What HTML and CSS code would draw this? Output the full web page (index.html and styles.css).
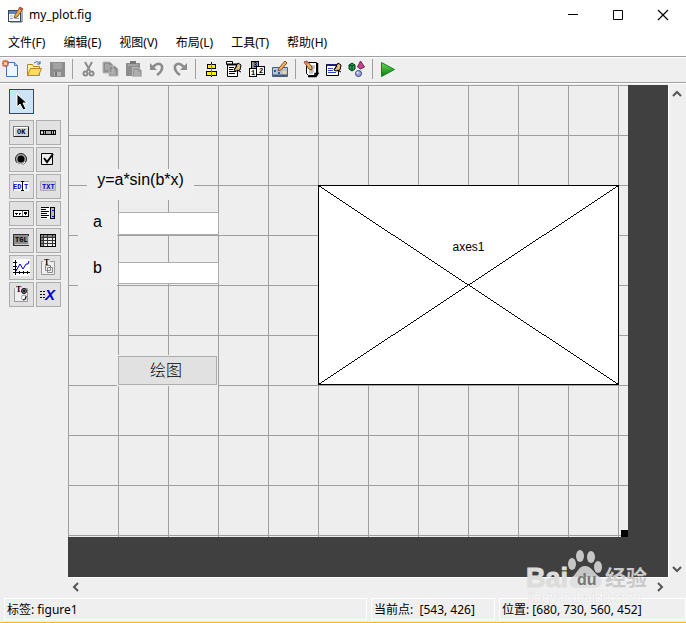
FILE: index.html
```html
<!DOCTYPE html>
<html lang="zh-CN">
<head>
<meta charset="utf-8">
<title>my_plot.fig</title>
<link rel="stylesheet" href="styles.css">
</head>
<body>
<div class="window">
  <header class="titlebar">
    <svg class="app-icon" width="18" height="18" viewBox="0 0 18 18"><rect x="1.500" y="4.500" width="12" height="11" fill="#fff" stroke="#33435c"/><path d="M2 5h11v3H2z" fill="#5c83bd"/><path d="M3 10h3M3 12.500h3M8 10h4M8 12.500h4" stroke="#8da0bc"/><path d="M15 5v11H3" fill="none" stroke="#52617a"/><path d="M13 1l3 2-6 8-3 1 1-3z" fill="#efaa4b" stroke="#86572c"/><path d="M13 1l3 2-1 2-3-2z" fill="#c65245"/></svg>
    <h1 class="title">my_plot.fig</h1>
    <div class="window-controls">
      <button class="window-button" aria-label="最小化"><svg width="12" height="12"><path d="M1 5.500h10" stroke="#000"/></svg></button>
      <button class="window-button" aria-label="最大化"><svg width="12" height="12"><path d="M1.500 1.500h9v9h-9z" fill="none" stroke="#000"/></svg></button>
      <button class="window-button" aria-label="关闭"><svg width="12" height="12"><path d="M1 1l10 10M11 1L1 11" stroke="#000" stroke-width="1.200"/></svg></button>
    </div>
  </header>
  <nav class="menubar">
    <button class="menu">文件(F)</button><button class="menu">编辑(E)</button><button class="menu">视图(V)</button><button class="menu">布局(L)</button><button class="menu">工具(T)</button><button class="menu">帮助(H)</button>
  </nav>
  <div class="toolbar" role="toolbar">
    <button class="tool" aria-label="新建"><svg width="18" height="18"><path d="M4.500 2.500h8l3 3v11h-11z" fill="#eef5ff" stroke="#4b73ba"/><path d="M12.500 2.500v3h3" fill="#bed5f6" stroke="#4b73ba"/><path d="M1 1h5v5H1z" fill="#e88c5c" stroke="#cf5830"/><path d="M3.500 0v7M0 3.500h7" stroke="#dc6a38"/><circle cx="3.500" cy="3.500" r="1.500" fill="#ffe4a0"/></svg></button>
    <button class="tool" aria-label="打开"><svg width="18" height="18"><path d="M2.500 15.500v-11h5l1 2h6v9z" fill="#fff0a6" stroke="#b8841b"/><path d="M2.500 15.500l3-7h11l-3 7z" fill="#ffdb61" stroke="#b8841b"/><path d="M9 3q4-3 6 1m0-3v3h-3" fill="none" stroke="#3e6b9d"/></svg></button>
    <button class="tool" aria-label="保存"><svg width="18" height="18"><path d="M2 2h15v15H3l-1-1z" fill="#8d8d8d"/><path d="M5 3h9v6H5z" fill="#a2a2a2"/><path d="M6 12h7v4H6z" fill="#b5b5b5"/><path d="M7 12h2v4H7z" fill="#777"/></svg></button>
    <span class="divider"></span>
    <button class="tool" aria-label="剪切"><svg width="18" height="18"><path d="M6 2l5 9M13 2L8 11" stroke="#8c8c8c" stroke-width="2"/><circle cx="6.500" cy="13.500" r="2" fill="none" stroke="#8c8c8c" stroke-width="2"/><circle cx="12.500" cy="13.500" r="2" fill="none" stroke="#8c8c8c" stroke-width="2"/></svg></button>
    <button class="tool" aria-label="复制"><svg width="18" height="18"><path d="M1 2h7l3 3v8H1zM7 6h6l3 3v7H7z" fill="#8d8d8d" stroke="#bababa"/><path d="M3 5h4M3 7h3M3 9h3M9 10h4M9 12h5M9 14h5" stroke="#bebebe"/></svg></button>
    <button class="tool" aria-label="粘贴"><svg width="18" height="18"><path d="M1 3h14v13H1z" fill="#8d8d8d"/><path d="M5 1h6v3H5z" fill="#777"/><path d="M3 5h10" stroke="#bbb"/><path d="M7.500 7.500h6l3 3v6h-9z" fill="#999" stroke="#bababa"/><path d="M9 11h4M9 13h6M9 15h6" stroke="#c2c2c2"/></svg></button>
    <button class="tool" aria-label="撤销"><svg width="18" height="18"><path d="M5 7q6-6 9-1 1 5-5 9" fill="none" stroke="#8c8c8c" stroke-width="2.500"/><path d="M2 3v7h7z" fill="#8c8c8c"/></svg></button>
    <button class="tool" aria-label="重做"><svg width="18" height="18"><path d="M13 7Q7 1 4 6q-1 5 5 9" fill="none" stroke="#8c8c8c" stroke-width="2.500"/><path d="M16 3v7H9z" fill="#8c8c8c"/></svg></button>
    <span class="divider"></span>
    <button class="tool" aria-label="对齐对象"><svg class="crisp" width="18" height="18"><path d="M9.500 2v15" stroke="#000"/><path d="M5.500 4.500h8v4h-8zM4.500 11.500h10v4h-10z" fill="#ffef00" stroke="#000"/><path d="M9.500 4v12" stroke="#777"/></svg></button>
    <button class="tool" aria-label="菜单编辑器"><svg width="18" height="18"><path d="M1.500 1.500h6v3h-6z" fill="#fff" stroke="#000"/><path d="M2.500 4.500h10v12h-10z" fill="#fff" stroke="#000"/><path d="M2 4.500h11" stroke="#000" stroke-width="2"/><path d="M4 7.500h5M4 9.500h4M4 11.500h7M4 13.500h6" stroke="#000"/><path d="M13 3l3 2-1 5-4 1-2-1z" fill="#e6be7e" stroke="#000"/><path d="M9 10l3-4M12 10l4 2" fill="none" stroke="#000"/></svg></button>
    <button class="tool" aria-label="Tab 键顺序编辑器"><svg class="crisp" width="18" height="18"><path d="M3.500 1.500h7v7h-7z" fill="#8f9eb5" stroke="#000"/><path d="M1.500 8.500h7v8h-7zM8.500 6.500h8v8h-8z" fill="#fff" stroke="#000"/><text x="5" y="7" class="micro">3</text><text x="3" y="15" class="micro">1</text><text x="11" y="13" class="micro">2</text></svg></button>
    <button class="tool" aria-label="工具栏编辑器"><svg width="18" height="18"><path d="M1.500 7.500h15v9h-15z" fill="#b5c4d8" stroke="#4c617e"/><path d="M2 15.500h14" stroke="#465b78" stroke-width="2"/><path d="M3 10h2v2H3zM7 12h2v2H7z" fill="#315b9c"/><path d="M12 11h3v3h-3z" fill="#efda73"/><path d="M14 1l2 2-6 7-3 1 1-3z" fill="#efb55b" stroke="#8a4c2d"/></svg></button>
    <span class="divider"></span>
    <button class="tool" aria-label="编辑器"><svg width="18" height="18"><path d="M4.500 2.500h10v13h-8l-2-2z" fill="#fff" stroke="#000"/><path d="M15.500 3v10M6 16.500h8l2-3h-3v3" fill="none" stroke="#000" stroke-width="1.500"/><path d="M9 6h4M10 8h3M7 11h5M7 13h4" stroke="#8a8a8a"/><path d="M2 2l3-1 5 6v3l-3-1z" fill="#efb55b" stroke="#6c3b20"/><path d="M2 2l3-1 1 2-2 2z" fill="#d86f67"/></svg></button>
    <button class="tool" aria-label="属性检查器"><svg width="18" height="18"><path d="M1.500 4.500h12v11h-12z" fill="#fff" stroke="#000"/><path d="M2 5h11" stroke="#17217f" stroke-width="2"/><path d="M3 8.500h5M3 10.500h5M3 12.500h8" stroke="#3345bb"/><path d="M13 3l3 2-1 5-4 1-2-1z" fill="#e6be7e" stroke="#000"/><path d="M9 10l3-4M12 10l4 2" fill="none" stroke="#000"/></svg></button>
    <button class="tool" aria-label="对象浏览器"><svg width="18" height="18"><path d="M1 5l3-2 3 2v4l-3 2-3-2z" fill="#12a64d" stroke="#063b1b"/><path d="M1 5l3 1 3-1M4 6v5" fill="none" stroke="#063b1b"/><path d="M12.500 1l-3 6 3 2 4-2z" fill="#cc408d" stroke="#6b244c"/><circle cx="10.500" cy="13.500" r="3" fill="#9ba8dc" stroke="#303c79"/><circle cx="9.500" cy="12.500" r="1" fill="#edf0ff"/></svg></button>
    <span class="divider"></span>
    <button class="tool" aria-label="运行"><svg width="18" height="18"><defs><linearGradient id="run" x1="0" y1="0" x2="0" y2="1"><stop offset="0" stop-color="#6bd95b"/><stop offset="1" stop-color="#087c10"/></linearGradient></defs><path d="M2.500 2.500v14l13-7z" fill="url(#run)" stroke="#168018"/></svg></button>
  </div>
  <main class="workspace">
    <aside class="palette">
      <button class="part selected" aria-label="选择"><svg width="21" height="21"><path d="M6 3v13l3-3 3 6 3-1-3-6h4z" fill="#000" stroke="#fff"/></svg></button>
      <button class="part" aria-label="按钮"><svg class="crisp" width="21" height="21"><path d="M2.500 4.500h15v10h-15z" fill="#d4d4d4" stroke="#777"/><path d="M3 14V5h14" stroke="#fff" fill="none"/><path d="M3 14.500h14.500V5" stroke="#222" fill="none"/><text x="6" y="12" class="micro">OK</text></svg></button>
      <button class="part" aria-label="滑块"><svg class="crisp" width="21" height="21"><path d="M2.500 8.500h15v4h-15z" fill="#aaa" stroke="#000"/><path d="M5.500 9v3M7.500 9v3M13.500 9v3M15.500 9v3" stroke="#000"/><path d="M3 10h2M16 10h1" stroke="#fff"/></svg></button>
      <button class="part" aria-label="单选按钮"><svg width="21" height="21"><circle cx="10" cy="10" r="5.500" fill="#aaa" stroke="#222"/><path d="M6 14a5 5 0 0 0 8-1" fill="none" stroke="#fff"/><circle cx="10" cy="10" r="3.500" fill="#000"/></svg></button>
      <button class="part" aria-label="复选框"><svg width="21" height="21"><path d="M3.500 4.500h11v11h-11z" fill="#eee" stroke="#000"/><path d="M6 9l3 4 6-8" fill="none" stroke="#000" stroke-width="2"/></svg></button>
      <button class="part" aria-label="可编辑文本"><svg width="21" height="21"><path d="M2 5h16v10H2z" fill="#fff"/><path d="M2.500 15V5.500H18" fill="none" stroke="#999"/><text x="2" y="13" class="micro blue">ED</text><text x="13" y="13" class="micro blue">T</text><path d="M11.500 6v8M10 5.500h3M10 14.500h3" stroke="#000"/></svg></button>
      <button class="part" aria-label="静态文本"><svg width="21" height="21"><path d="M2.500 5.500h15v9h-15z" fill="#cfcfcf" stroke="#aaa"/><text x="4" y="13" class="micro blue">TXT</text></svg></button>
      <button class="part" aria-label="弹出菜单"><svg class="crisp" width="21" height="21"><rect x="2.500" y="7.500" width="15" height="6" rx="1" fill="#fff" stroke="#000"/><path d="M4 10h3M5 11h1M8 10h2M8 11h1M13 9h3l-1 2h-1z" fill="#000" stroke="#000"/><path d="M11.500 8v5" stroke="#777"/></svg></button>
      <button class="part" aria-label="列表框"><svg class="crisp" width="21" height="21"><path d="M3.500 4.500h13v11h-13z" fill="#fff"/><path d="M3 4.500h8M3 6.500h5M3 8.500h8M3 10.500h6M3 12.500h8M3 14.500h6" stroke="#000"/><path d="M12.500 4.500h4v11h-4z" fill="#bbb" stroke="#000"/><path d="M14 7h2M14 13h2" stroke="#0000d9"/></svg></button>
      <button class="part" aria-label="切换按钮"><svg class="crisp" width="21" height="21"><path d="M2.500 4.500h15v11h-15z" fill="#8d8d8d" stroke="#333"/><path d="M4 14.500h13.500V6" fill="none" stroke="#ccc"/><text x="4" y="12" class="micro">TGL</text></svg></button>
      <button class="part" aria-label="表"><svg class="crisp" width="21" height="21"><path d="M2.500 4.500h15v12h-15z" fill="#eee" stroke="#000"/><path d="M3 5h14v2H3zM3 5h2v11H3z" fill="#888"/><path d="M5.500 5v11M9.500 5v11M14.500 5v11M3 7.500h14M3 10.500h14M3 13.500h14" stroke="#333"/></svg></button>
      <button class="part" aria-label="坐标区"><svg width="21" height="21"><path d="M2 2h17v17H2z" fill="#fff"/><path d="M4.500 3v15M2 15.500h17M2 5.500h4M2 9.500h4M2 12.500h4M8.500 14v3M12.500 14v3M16.500 14v3" stroke="#000"/><path d="M5 14l4-7 3 5 3-5h2l1-3" fill="none" stroke="#0000d9"/></svg></button>
      <button class="part" aria-label="面板"><svg width="21" height="21"><path d="M3.500 4.500h13v13h-13z" fill="#efefef" stroke="#999"/><path d="M5 2h7v6H5z" fill="#efefef"/><text x="6" y="8" class="panel-mark">T</text><path d="M7.500 8.500h5v5h-5zM9.500 10.500h5v5h-5z" fill="none" stroke="#888"/></svg></button>
      <button class="part" aria-label="按钮组"><svg width="21" height="21"><path d="M3.500 4.500h13v13h-13z" fill="#efefef" stroke="#999"/><path d="M4 2h7v6H4z" fill="#efefef"/><text x="5" y="8" class="panel-mark">T</text><circle cx="13" cy="7" r="2.500" fill="#777" stroke="#111"/><circle cx="13" cy="7" r="1" fill="#000"/><circle cx="13" cy="13.500" r="2.500" fill="#fff" stroke="#999"/><path d="M12 16q3 0 3-4" fill="none" stroke="#111"/></svg></button>
      <button class="part" aria-label="ActiveX 控件"><svg width="21" height="21"><path d="M2 7.500h6M2 10.500h6M2 13.500h5" stroke="#000" stroke-dasharray="2 1"/><text x="7" y="16" class="active-x">X</text></svg></button>
    </aside>
    <div class="viewport">
      <div class="figure">
        <div class="static-text formula">y=a*sin(b*x)</div>
        <label class="static-text label-a" for="a">a</label><input class="edit edit-a" id="a">
        <label class="static-text label-b" for="b">b</label><input class="edit edit-b" id="b">
        <button class="plot-button">绘图</button>
        <div class="axes"><svg class="axes-lines" viewBox="0 0 300 199" preserveAspectRatio="none" shape-rendering="crispEdges"><path d="M0 0l300 199M300 0L0 199" stroke="#000"/></svg><span class="axes-name">axes1</span></div>
        <span class="resize-handle"></span>
      </div>
    </div>
    <div class="scroll-y"><button class="scroll-button" aria-label="向上"><svg width="10" height="8"><path d="M1 6l4-4 4 4" class="arrow"/></svg></button><button class="scroll-button" aria-label="向下"><svg width="10" height="8"><path d="M1 2l4 4 4-4" class="arrow"/></svg></button></div>
    <div class="scroll-x"><button class="scroll-button" aria-label="向左"><svg width="8" height="10"><path d="M6 1L2 5l4 4" class="arrow"/></svg></button><button class="scroll-button" aria-label="向右"><svg width="8" height="10"><path d="M2 1l4 4-4 4" class="arrow"/></svg></button></div>
  </main>
  <footer class="statusbar"><div class="status">标签: figure1</div><div class="status">当前点:&nbsp; [543, 426]</div><div class="status">位置: [680, 730, 560, 452]</div></footer>
  <svg class="watermark" width="126" height="62" viewBox="0 0 126 62">
    <g fill="#dedede" fill-opacity=".85"><ellipse cx="46" cy="20" rx="4" ry="6"/><ellipse cx="54" cy="12" rx="4" ry="6"/><ellipse cx="65" cy="13" rx="4" ry="6"/><ellipse cx="72" cy="23" rx="4" ry="6"/><path d="M59 22c-7 0-7 7-13 11-5 6-2 11 4 11h18c7 0 10-5 6-11-7-4-8-11-15-11z"/></g>
    <text x="0" y="43" class="mark-brand">Bai</text><text x="51" y="41" class="mark-du">du</text><text x="79" y="41" class="mark-cjk">经验</text><text x="2" y="58" class="mark-url">jingyan.baidu.com</text>
  </svg>
</div>
</body>
</html>
```
FILE: styles.css
```css
* { box-sizing: border-box; }
body { margin: 0; font: 12px/16px "Noto Sans", "Noto Sans CJK SC", sans-serif; color: #000; background: #efefef; }
button { padding: 0; border: 0; background: none; font: inherit; color: inherit; }
svg { display: block; }
.crisp { shape-rendering: crispEdges; }
.window { position: relative; display: flex; flex-direction: column; min-height: 100vh; border-bottom: 1px solid #f8b61e; }
.titlebar { display: flex; align-items: center; height: 30px; padding-left: 7px; gap: 4px; background: #fff; }
.title { flex: 1; margin: 0; font-size: 12px; font-weight: 400; }
.window-controls { display: flex; padding-right: 1px; }
.window-button { display: grid; place-items: center; width: 45px; height: 28px; }
.menubar { display: flex; gap: 2px; height: 26px; background: #fff; }
.menu { padding: 0 8px; white-space: nowrap; }
.toolbar { display: flex; align-items: center; height: 27px; padding-bottom: 2px; border: solid #a0a0a0; border-width: 1px 0; box-shadow: inset 0 1px #fff, 0 1px #fff; }
.tool { display: grid; place-items: center; width: 23px; height: 23px; padding-right: 2px; }
.divider { width: 1px; height: 20px; margin: 0 4px 0 3px; background: #a0a0a0; }
.workspace { flex: 1; display: grid; grid-template-columns: 68px 1fr 18px; grid-template-rows: 1fr 18px; padding-top: 2px; }
.palette { grid-row: 1 / 3; display: grid; grid-template-columns: 25px 25px; grid-template-rows: 29px; grid-auto-rows: 25px; align-content: start; gap: 2px; padding: 4px 0 0 9px; }
.part { display: grid; place-items: center; border: 1px solid #adadad; background: #e1e1e1; }
.selected { grid-column: 1 / 3; width: 25px; height: 25px; border-color: #00559b; background: #cce4f7; }
.micro { font: 700 7px "Liberation Mono", monospace; }
.blue { fill: #0000d9; }
.panel-mark { font: 700 8px "Liberation Serif", serif; }
.active-x { font: italic 700 15px "Liberation Sans", sans-serif; fill: #0000c8; }
.viewport { min-width: 0; overflow: hidden; background: #404040; }
.figure { position: relative; width: 560px; height: 452px; background: repeating-linear-gradient(90deg, #a0a0a0 0 1px, transparent 1px 50px), repeating-linear-gradient(#a0a0a0 0 1px, transparent 1px 50px), #eee; }
.static-text { position: absolute; background: #efefef; font: 16px/20px "Liberation Sans", sans-serif; text-align: center; }
.formula { left: 19px; top: 84px; width: 107px; height: 31px; line-height: 22px; }
.label-a, .label-b { left: 10px; width: 39px; height: 29px; }
.label-a { top: 127px; }
.label-b { top: 173px; }
.edit { position: absolute; left: 50px; width: 101px; border: 1px solid #abadb3; border-radius: 0; background: #fff; font: 16px "Liberation Sans", sans-serif; }
.edit-a { top: 127px; height: 23px; }
.edit-b { top: 177px; height: 22px; }
.plot-button { position: absolute; left: 50px; top: 271px; width: 99px; height: 29px; padding: 0 3px 4px 0; border: 1px solid #adadad; outline: 1px solid #efefef; background: #e1e1e1; font: 300 16px/22px "Noto Sans CJK SC", sans-serif; }
.axes { position: absolute; left: 250px; top: 100px; width: 301px; height: 200px; border: 1px solid #000; background: #fff; }
.axes-lines { width: 100%; height: 100%; }
.axes-name { position: absolute; left: 0; right: 0; top: 53px; text-align: center; font: 12px/16px "Liberation Sans", sans-serif; }
.resize-handle { position: absolute; right: 0; bottom: 0; width: 7px; height: 7px; background: #000; }
.scroll-x, .scroll-y { display: flex; justify-content: space-between; }
.scroll-y { flex-direction: column; border-left: 1px solid #fff; }
.scroll-x { grid-column: 2; border-top: 1px solid #fff; }
.scroll-button { display: grid; place-items: center; width: 16px; height: 17px; }
.arrow { fill: none; stroke: #555; stroke-width: 2; }
.statusbar { display: grid; grid-template-columns: 363px 124px 1fr; gap: 4px; height: 27px; padding: 3px 0 2px 4px; }
.status { padding: 3px 2px 0; border: 1px solid #fff; white-space: nowrap; }
.watermark { position: absolute; right: 34px; bottom: 16px; pointer-events: none; }
.mark-brand { font: 700 27px "Liberation Sans", sans-serif; fill: #ddd; stroke: #ddd; stroke-width: 1px; }
.mark-du { font: 700 16px "Liberation Sans", sans-serif; fill: #777; }
.mark-cjk { font: 700 21px "Noto Sans CJK SC", sans-serif; fill: #c9c9c9; }
.mark-url { font: 14px "Liberation Sans", sans-serif; fill: #f8f8f8; stroke: #e2e2e2; stroke-width: 1px; paint-order: stroke; }
```
